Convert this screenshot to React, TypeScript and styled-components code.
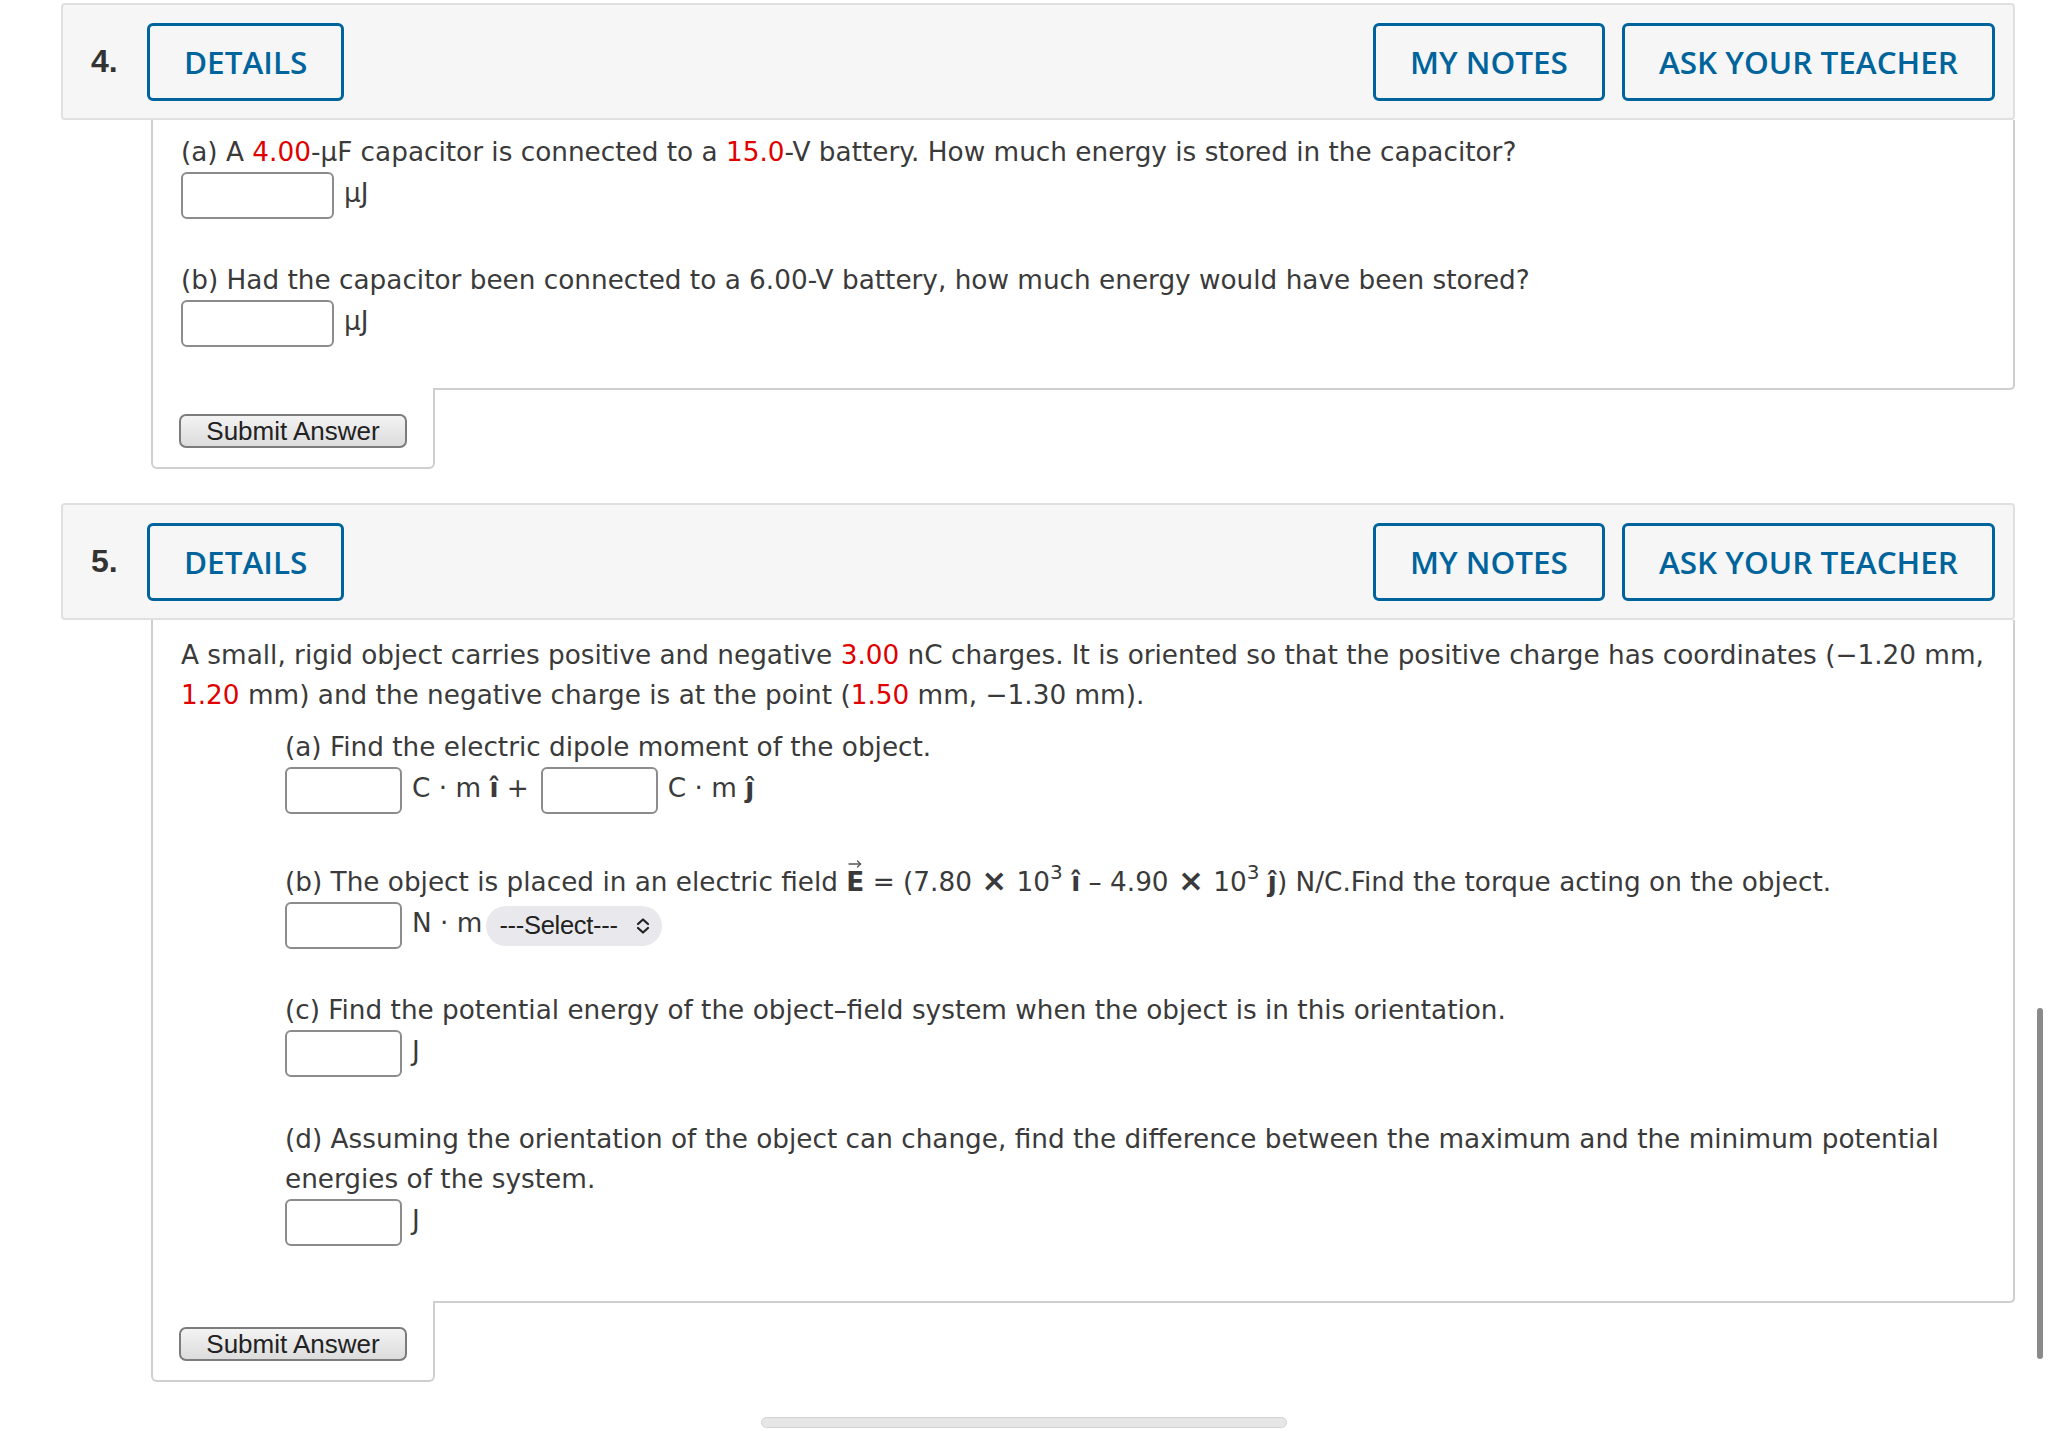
import React from 'react';
import styled, { createGlobalStyle } from 'styled-components';

const GlobalStyle = createGlobalStyle`
  html, body { margin: 0; padding: 0; background: #fff; }
  body { font-family: "DejaVu Sans", Verdana, sans-serif; color: #3a3a3a; }
`;

const BLUE = '#00649c';
const LINE = '#cfcfcf';

const Page = styled.main`
  padding: 3px 33px 60px 61px;
  display: flex;
  flex-direction: column;
  gap: 34px;
`;

const Question = styled.section`
  display: flex;
  flex-direction: column;
`;

const Header = styled.header`
  display: flex;
  align-items: center;
  height: 117px;
  box-sizing: border-box;
  background: #f6f6f6;
  border: 2px solid #e0e0e0;
  border-radius: 4px;
  padding: 0 18px 0 28px;
`;

const Num = styled.span`
  font-family: "Liberation Sans", Arial, sans-serif;
  font-weight: 700;
  font-size: 32px;
  color: #333;
  width: 56px;
`;

const HeadButton = styled.button<{ $push?: boolean }>`
  height: 78px;
  box-sizing: border-box;
  border: 3px solid ${BLUE};
  border-radius: 6px;
  background: transparent;
  color: ${BLUE};
  font-family: "Open Sans", sans-serif;
  font-weight: 600;
  font-size: 31.5px;
  padding: 0 34px;
  margin-left: ${(p) => (p.$push ? 'auto' : '17px')};
  cursor: pointer;
  &:first-of-type { margin-left: 0; }
`;

const Panel = styled.div<{ $padBottom: number; $padTop: number }>`
  margin-left: 90px;
  border: 2px solid ${LINE};
  border-top: none;
  border-bottom-right-radius: 5px;
  padding: ${(p) => p.$padTop}px 28px ${(p) => p.$padBottom}px 28px;
  font-size: 26.3px;
  line-height: 40px;
  color: #3a3a3a;
`;

const Intro = styled.p`
  margin: 0 0 12px 0;
`;

const Part = styled.div<{ $indent?: boolean; $gap: number }>`
  margin-left: ${(p) => (p.$indent ? '104px' : '0')};
  margin-bottom: ${(p) => p.$gap}px;
`;

const Prompt = styled.div`
  white-space: normal;
`;

const AnswerRow = styled.div`
  display: flex;
  align-items: center;
  height: 47px;
  line-height: normal;
`;

const Input = styled.input<{ $w: number }>`
  width: ${(p) => p.$w}px;
  height: 47px;
  box-sizing: border-box;
  border: 2px solid #8c8c8c;
  border-radius: 6px;
  background: #fff;
  margin: 0;
  flex: none;
`;

const Unit = styled.span<{ $after?: number }>`
  margin: -6px ${(p) => p.$after ?? 8}px 0 10px;
  white-space: pre;
`;

const Red = styled.span`
  color: #e00000;
`;

const Hat = styled.b`
  font-weight: 700;
`;

const Times = styled.b`
  font-weight: 700;
  font-size: 31px;
  margin: 0 1px;
`;

const Sup = styled.sup`
  font-size: 20px;
  line-height: 0;
  vertical-align: 12px;
`;

const EVec = styled.b`
  position: relative;
  display: inline-block;
  font-weight: 700;
`;

const VecArrow = styled.svg`
  position: absolute;
  left: 2px;
  top: -3px;
  width: 14px;
  height: 9px;
`;

const Select = styled.div`
  display: inline-flex;
  align-items: center;
  justify-content: space-between;
  box-sizing: border-box;
  width: 176px;
  height: 40px;
  padding: 0 10px 0 13px;
  border-radius: 20px;
  background: #e9e9ed;
  font-family: "Liberation Sans", Arial, sans-serif;
  font-size: 25.5px;
  letter-spacing: -0.3px;
  color: #222;
  margin-left: -4px;
`;

const SubmitTab = styled.div`
  margin-left: 90px;
  margin-top: -2px;
  width: 284px;
  height: 81px;
  box-sizing: border-box;
  border: 2px solid ${LINE};
  border-top: none;
  border-radius: 0 0 6px 6px;
  background: #fff;
  padding: 26px 0 0 26px;
`;

const SubmitButton = styled.button`
  width: 228px;
  height: 34px;
  box-sizing: border-box;
  border: 2px solid #7c7c7c;
  border-radius: 7px;
  background: linear-gradient(#f3f3f3, #dcdcdc);
  font-family: "Liberation Sans", Arial, sans-serif;
  font-size: 26px;
  line-height: 1;
  color: #222;
  padding: 0;
`;

const VScroll = styled.div`
  position: fixed;
  left: 2037px;
  top: 1008px;
  width: 6px;
  height: 351px;
  border-radius: 3px;
  background: #8a8a8a;
`;

const HScroll = styled.div`
  position: fixed;
  left: 761px;
  top: 1417px;
  width: 526px;
  height: 11px;
  box-sizing: border-box;
  border: 1px solid #d2d2d2;
  border-radius: 6px;
  background: #e6e6e6;
`;

const Chevrons = () => (
  <svg width="18" height="20" viewBox="0 0 18 20" fill="none" stroke="#222" strokeWidth="2.2" strokeLinecap="round" strokeLinejoin="round">
    <path d="M4 8 L9 3.5 L14 8" />
    <path d="M4 12 L9 16.5 L14 12" />
  </svg>
);

const QHeader = ({ n }: { n: number }) => (
  <Header>
    <Num>{n}.</Num>
    <HeadButton>DETAILS</HeadButton>
    <HeadButton $push>MY NOTES</HeadButton>
    <HeadButton>ASK YOUR TEACHER</HeadButton>
  </Header>
);

const Submit = () => (
  <SubmitTab>
    <SubmitButton>Submit Answer</SubmitButton>
  </SubmitTab>
);

export default function App() {
  return (
    <>
      <GlobalStyle />
      <Page>
        <Question>
          <QHeader n={4} />
          <Panel $padTop={12} $padBottom={41}>
            <Part $gap={41}>
              <Prompt>
                (a) A <Red>4.00</Red>-μF capacitor is connected to a <Red>15.0</Red>-V battery. How much energy is stored in the capacitor?
              </Prompt>
              <AnswerRow>
                <Input $w={153} />
                <Unit>μJ</Unit>
              </AnswerRow>
            </Part>
            <Part $gap={0}>
              <Prompt>
                (b) Had the capacitor been connected to a 6.00-V battery, how much energy would have been stored?
              </Prompt>
              <AnswerRow>
                <Input $w={153} />
                <Unit>μJ</Unit>
              </AnswerRow>
            </Part>
          </Panel>
          <Submit />
        </Question>

        <Question>
          <QHeader n={5} />
          <Panel $padTop={15} $padBottom={55}>
            <Intro>
              A small, rigid object carries positive and negative <Red>3.00</Red> nC charges. It is oriented so that the positive charge has coordinates (−1.20 mm, <Red>1.20</Red> mm) and the negative charge is at the point (<Red>1.50</Red> mm, −1.30 mm).
            </Intro>
            <Part $indent $gap={46}>
              <Prompt>(a) Find the electric dipole moment of the object.</Prompt>
              <AnswerRow>
                <Input $w={117} />
                <Unit $after={12}>C · m <Hat>î</Hat> +</Unit>
                <Input $w={117} />
                <Unit>C · m <Hat>ĵ</Hat></Unit>
              </AnswerRow>
            </Part>
            <Part $indent $gap={41}>
              <Prompt>
                (b) The object is placed in an electric field{' '}
                <EVec>
                  E
                  <VecArrow viewBox="0 0 14 9" fill="none" stroke="#555" strokeWidth="1.3" strokeLinecap="round">
                    <path d="M1 5 H12.5" />
                    <path d="M9.5 2 L12.5 5 L9.5 8" />
                  </VecArrow>
                </EVec>{' '}
                = (7.80 <Times>×</Times> 10<Sup>3</Sup> <Hat>î</Hat> – 4.90 <Times>×</Times> 10<Sup>3</Sup> <Hat>ĵ</Hat>) N/C.Find the torque acting on the object.
              </Prompt>
              <AnswerRow>
                <Input $w={117} />
                <Unit>N · m</Unit>
                <Select>
                  <span>---Select---</span>
                  <Chevrons />
                </Select>
              </AnswerRow>
            </Part>
            <Part $indent $gap={42}>
              <Prompt>(c) Find the potential energy of the object–field system when the object is in this orientation.</Prompt>
              <AnswerRow>
                <Input $w={117} />
                <Unit>J</Unit>
              </AnswerRow>
            </Part>
            <Part $indent $gap={0}>
              <Prompt>
                (d) Assuming the orientation of the object can change, find the difference between the maximum and the minimum potential energies of the system.
              </Prompt>
              <AnswerRow>
                <Input $w={117} />
                <Unit>J</Unit>
              </AnswerRow>
            </Part>
          </Panel>
          <Submit />
        </Question>
      </Page>
      <VScroll />
      <HScroll />
    </>
  );
}
